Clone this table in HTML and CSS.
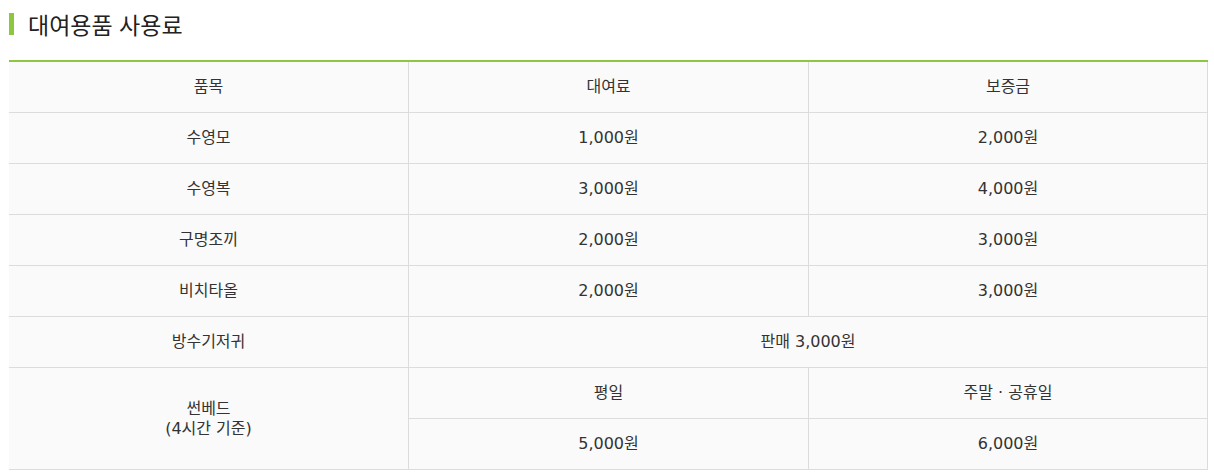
FILE: index.html
```html
<!DOCTYPE html>
<html lang="ko">
<head>
<meta charset="utf-8">
<link rel="stylesheet" href="styles.css">
</head>
<body>
<div class="wrap">
  <h2 class="title">대여용품 사용료</h2>
  <table class="fee">
    <colgroup><col class="c1"><col class="c2"><col class="c3"></colgroup>
    <thead>
      <tr><th>품목</th><th>대여료</th><th>보증금</th></tr>
    </thead>
    <tbody>
      <tr><td>수영모</td><td>1,000원</td><td>2,000원</td></tr>
      <tr><td>수영복</td><td>3,000원</td><td>4,000원</td></tr>
      <tr><td>구명조끼</td><td>2,000원</td><td>3,000원</td></tr>
      <tr><td>비치타올</td><td>2,000원</td><td>3,000원</td></tr>
      <tr><td>방수기저귀</td><td colspan="2">판매 3,000원</td></tr>
      <tr><td rowspan="2">썬베드<br>(4시간 기준)</td><td>평일</td><td>주말 · 공휴일</td></tr>
      <tr><td>5,000원</td><td>6,000원</td></tr>
    </tbody>
  </table>
</div>
</body>
</html>
```
FILE: styles.css
```css
html, body { margin: 0; padding: 0; background: #fff; }
body { font-family: "Noto Sans CJK KR", "Noto Sans", sans-serif; color: #333; }
.wrap { padding: 0 9px; }
.title {
  display: flex;
  align-items: center;
  margin: 12px 0 24px;
  height: 24px;
  font-size: 23px;
  font-weight: 400;
  color: #222;
  line-height: 24px;
}
.title::before {
  content: "";
  display: block;
  width: 5px;
  height: 22px;
  margin-right: 14px;
  background: #8dc63f;
}
.fee {
  width: 1199px;
  table-layout: fixed;
  border-collapse: separate;
  border-spacing: 0;
  border-top: 2px solid #8dc63f;
}
.fee .c1 { width: 400px; }
.fee .c2 { width: 400px; }
.fee .c3 { width: 399px; }
.fee th, .fee td {
  background: #fafafa;
  border-bottom: 1px solid #dcdcdc;
  border-right: 1px solid #dcdcdc;
  padding: 15px 0;
  line-height: 20px;
  font-family: "DejaVu Sans", "Noto Sans CJK KR", sans-serif;
  font-size: 16px;
  font-weight: 400;
  text-align: center;
  color: #333;
}
```
